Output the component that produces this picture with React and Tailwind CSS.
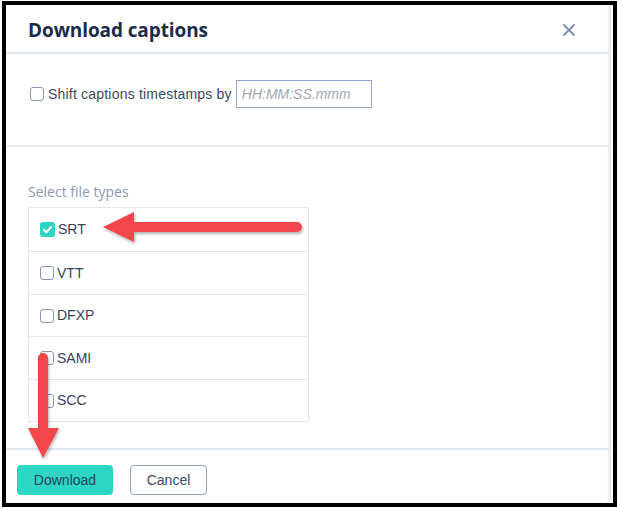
import { useState } from "react";

const types = ["SRT", "VTT", "DFXP", "SAMI", "SCC"];
const rowH = ["h-[43px]", "h-[43px]", "h-[42px]", "h-[43px]", "h-[42px]"];

function Box({ checked, onClick }) {
  if (checked) {
    return (
      <span
        onClick={onClick}
        className="w-[15px] h-[15px] rounded-[3px] bg-[#2dd4c0] flex items-center justify-center shrink-0"
      >
        <svg width="11" height="11" viewBox="0 0 12 12">
          <path d="M2 6.2 L4.8 9 L10 3.2" fill="none" stroke="white" strokeWidth="2.2" strokeLinecap="round" strokeLinejoin="round" />
        </svg>
      </span>
    );
  }
  return (
    <span
      onClick={onClick}
      className="w-[14px] h-[14px] rounded-[3px] border border-[#8797b3] bg-white shrink-0"
    />
  );
}

export default function App() {
  const [sel, setSel] = useState({ SRT: true });
  const [shift, setShift] = useState(false);

  return (
    <div className="w-[617px] h-[509px] bg-white relative overflow-hidden" style={{ fontFamily: "'Liberation Sans', Arial, sans-serif" }}>
      <div className="absolute left-[2px] top-[1px] w-[615px] h-[506px] border-[4px] border-black" />
      <div className="ml-[6px] mt-[5px] w-[605px] h-[497px] flex flex-col shadow-[inset_-4px_0_3px_-2px_rgba(0,0,0,0.12)]">
        <div className="h-[47px] flex items-center justify-between pl-[22px] pr-[36px] pt-[3px]">
          <h1 className="text-[19px] font-bold text-[#1c2b4a] tracking-[-0.1px]" style={{ fontFamily: "'Open Sans', sans-serif" }}>
            Download captions
          </h1>
          <svg width="12" height="12" viewBox="0 0 12 12">
            <path d="M1 1 L11 11 M11 1 L1 11" stroke="#7d8dab" strokeWidth="1.8" strokeLinecap="round" />
          </svg>
        </div>
        <div className="h-[2px] bg-[#e0e8f0]" />

        <div className="h-[91px] flex items-start pl-[24px] pt-[26px]">
          <div className="h-[28px] flex items-center">
            <Box checked={shift} onClick={() => setShift(!shift)} />
            <span className="ml-[4px] text-[14px] tracking-[0.2px] text-[#3a4a63]">Shift captions timestamps by</span>
          </div>
          <input
            placeholder="HH:MM:SS.mmm"
            className="ml-[4px] w-[136px] h-[28px] border border-[#8ea6c9] px-[5px] text-[14px] italic placeholder:text-[#a0a8b5] outline-none"
          />
        </div>
        <div className="h-[2px] bg-[#e6ecf2]" />

        <div className="h-[301px] pl-[22px] pt-[34px]">
          <div className="text-[14px] text-[#8e99aa] h-[26px]" style={{ fontFamily: "'Open Sans', sans-serif" }}>
            Select file types
          </div>
          <div className="w-[281px] border border-[#e3e8ee]">
            {types.map((t, i) => (
              <div
                key={t}
                className={`${rowH[i]} flex items-center pl-[11px] ${i > 0 ? "border-t border-[#e3e8ee]" : ""}`}
              >
                <Box checked={!!sel[t]} onClick={() => setSel({ ...sel, [t]: !sel[t] })} />
                <span className="ml-[3px] text-[14px] text-[#34445e]">{t}</span>
              </div>
            ))}
          </div>
        </div>
        <div className="h-[2px] bg-[#e0e8f0]" />

        <div className="flex-1 flex items-start gap-[17px] pl-[11px] pt-[15px]">
          <button className="w-[96px] h-[30px] rounded-[4px] bg-[#2dd5c3] text-[14px] text-[#2b4060]">
            Download
          </button>
          <button className="w-[77px] h-[30px] rounded-[4px] border border-[#8ea3c2] bg-white text-[14px] text-[#3a4a66]">
            Cancel
          </button>
        </div>
      </div>

      <svg className="absolute left-0 top-0 pointer-events-none" width="617" height="509">
        <defs>
          <filter id="sh" x="-20%" y="-20%" width="140%" height="140%">
            <feDropShadow dx="1" dy="2" stdDeviation="1.5" floodColor="#000" floodOpacity="0.3" />
          </filter>
        </defs>
        <g filter="url(#sh)" fill="#f2464b">
          <path d="M103 227 L134 212 L134 222 L297 222 A5 5 0 0 1 297 232 L134 232 L134 242 Z" />
          <path d="M43 458 L28 428 L38 428 L38 358 A5 5 0 0 1 48 358 L48 428 L59 428 Z" />
        </g>
      </svg>
    </div>
  );
}
